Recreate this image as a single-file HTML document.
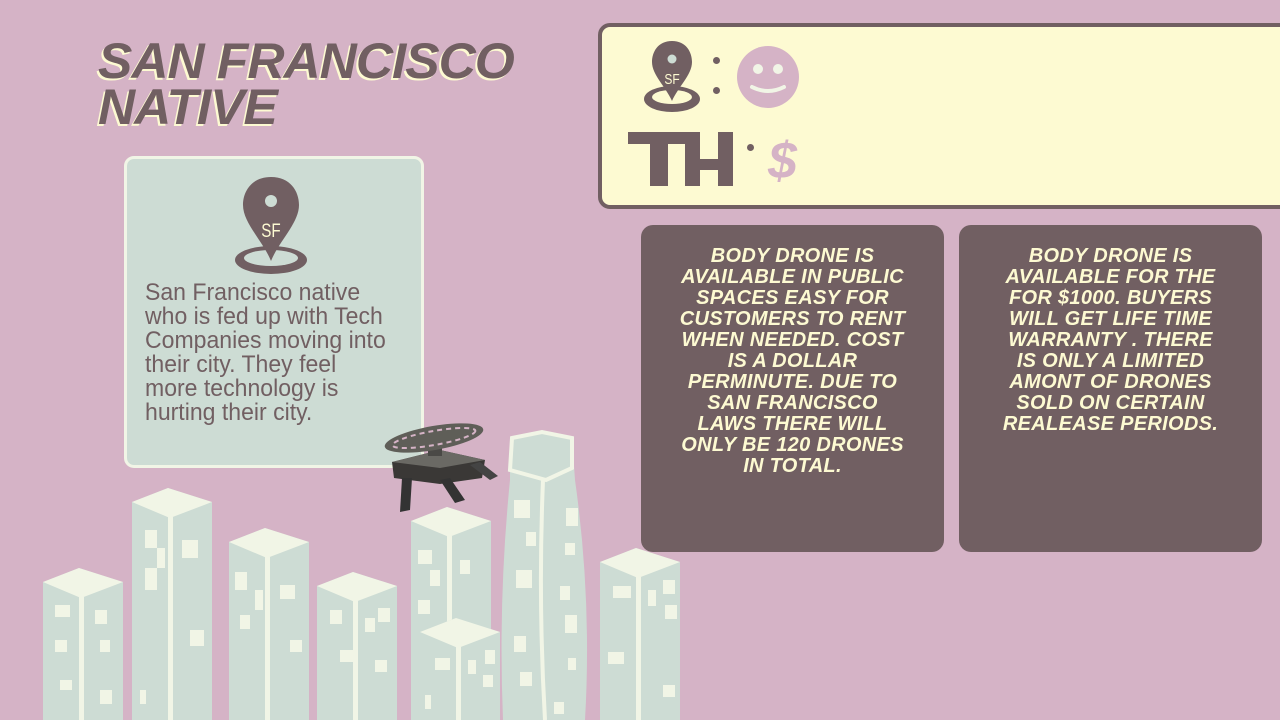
<!DOCTYPE html>
<html><head><meta charset="utf-8"><style>
body{margin:0;width:1280px;height:720px;background:#d5b3c6;position:relative;overflow:hidden;font-family:"Liberation Sans",sans-serif}
.title{position:absolute;left:98px;top:38px;font-weight:bold;font-style:italic;font-size:50px;line-height:46px;color:#715f62;text-shadow:-2px 2px 0 #fdfad2;letter-spacing:-1px;transform:scaleX(1.03);transform-origin:left}
.card{position:absolute;left:124px;top:156px;width:294px;height:306px;background:#cddcd4;border:3px solid #f1f5e6;border-radius:10px}
.card p{position:absolute;left:18px;top:122px;margin:0;white-space:nowrap;font-size:24px;line-height:24px;color:#715f62;transform:scaleX(0.96);transform-origin:left}
.top{position:absolute;left:598px;top:23px;width:690px;height:178px;background:#fdfad2;border:4px solid #715f62;border-radius:12px}
.box{position:absolute;top:225px;width:303px;height:327px;background:#715f62;border-radius:12px;color:#fdfad2;font-weight:bold;font-style:italic;font-size:20px;line-height:21px;text-align:center;box-sizing:border-box;padding-top:21px;letter-spacing:0.3px;overflow:hidden}
</style></head><body>
<div class="title">SAN FRANCISCO<br>NATIVE</div>
<div class="card">
<svg style="position:absolute;left:104px;top:16px" width="80" height="104" viewBox="0 0 80 104">
<ellipse cx="40" cy="85" rx="36" ry="14" fill="#715f62"/><ellipse cx="40" cy="83" rx="27" ry="8" fill="#cddcd4"/>
<path d="M40 2 C21 2 12 16 12 30 C12 48 32 66 40 86 C48 66 68 48 68 30 C68 16 59 2 40 2Z" fill="#715f62"/>
<circle cx="40" cy="26" r="6" fill="#cddcd4"/>
<text x="40" y="62" text-anchor="middle" font-family="Liberation Sans,sans-serif" font-size="19" fill="#fdfad2" transform="translate(40 0) scale(0.8 1) translate(-40 0)">SF</text></svg>
<p>San Francisco native<br>who is fed up with Tech<br>Companies moving into<br>their city. They feel<br>more technology is<br>hurting their city.</p>
</div>
<div class="top">
<svg style="position:absolute;left:40px;top:12px" width="60" height="76" viewBox="0 0 60 76">
<ellipse cx="30" cy="60" rx="28" ry="13" fill="#715f62"/><ellipse cx="30" cy="58" rx="20" ry="7" fill="#fdfad2"/>
<path d="M30 2 C16 2 10 13 10 23 C10 36 24 48 30 62 C36 48 50 36 50 23 C50 13 44 2 30 2Z" fill="#715f62"/>
<circle cx="30" cy="20" r="4.5" fill="#cddcd4"/>
<text x="30" y="45" text-anchor="middle" font-family="Liberation Sans,sans-serif" font-size="15" fill="#fdfad2" transform="translate(30 0) scale(0.8 1) translate(-30 0)">SF</text></svg>
<div style="position:absolute;left:111px;top:30px;width:7px;height:7px;border-radius:50%;background:#715f62"></div>
<div style="position:absolute;left:111px;top:60px;width:7px;height:7px;border-radius:50%;background:#715f62"></div>
<svg style="position:absolute;left:134px;top:18px" width="64" height="64" viewBox="0 0 64 64"><circle cx="32" cy="32" r="31" fill="#d5b3c6"/><circle cx="22" cy="24" r="5" fill="#f1f5e6"/><circle cx="42" cy="24" r="5" fill="#f1f5e6"/><path d="M16 42 Q32 50 48 42" stroke="#f1f5e6" stroke-width="4" fill="none" stroke-linecap="round"/></svg>
<svg style="position:absolute;left:26px;top:105px" width="110" height="56" viewBox="0 0 110 56" fill="#715f62">
<rect x="0" y="0" width="60" height="12"/><rect x="22" y="0" width="18" height="54"/>
<rect x="57" y="0" width="15" height="54"/><rect x="57" y="27" width="48" height="11"/><rect x="90" y="0" width="15" height="54"/>
</svg>
<div style="position:absolute;left:145px;top:117px;width:7px;height:7px;border-radius:50%;background:#715f62"></div>
<div style="position:absolute;left:166px;top:107px;font-weight:bold;font-style:italic;font-size:52px;line-height:54px;color:#d5b3c6">$</div>
</div>
<div class="box" style="left:641px">BODY DRONE IS<br>AVAILABLE IN PUBLIC<br>SPACES EASY FOR<br>CUSTOMERS TO RENT<br>WHEN NEEDED. COST<br>IS A DOLLAR<br>PERMINUTE. DUE TO<br>SAN FRANCISCO<br>LAWS THERE WILL<br>ONLY BE 120 DRONES<br>IN TOTAL.</div>
<div class="box" style="left:959px">BODY DRONE IS<br>AVAILABLE FOR THE<br>FOR $1000. BUYERS<br>WILL GET LIFE TIME<br>WARRANTY . THERE<br>IS ONLY A LIMITED<br>AMONT OF DRONES<br>SOLD ON CERTAIN<br>REALEASE PERIODS.</div>
<svg style="position:absolute;left:0;top:0" width="1280" height="720" viewBox="0 0 1280 720">
<defs>
<g id="b"><path d="M0 14 L36 0 L80 14 L80 300 L0 300Z" fill="#cddcd4"/><path d="M0 14 L36 0 L80 14 L38 30Z" fill="#f1f5e6"/><rect x="36" y="29" width="5" height="271" fill="#f1f5e6"/></g>
</defs>
<use href="#b" x="43" y="568"/>
<use href="#b" x="132" y="488"/>
<use href="#b" x="229" y="528"/>
<use href="#b" x="317" y="572"/>
<use href="#b" x="411" y="507"/>
<use href="#b" x="420" y="618"/>
<use href="#b" x="600" y="548"/>
<path d="M510 438 L542 432 L572 438 L575 480 Q592 600 585 720 L503 720 Q498 600 510 480Z" fill="#cddcd4"/>
<path d="M512 438 L542 432 L572 438 L572 468 L546 480 L510 470Z" fill="none" stroke="#f1f5e6" stroke-width="4"/>
<path d="M543 480 Q538 600 545 720" stroke="#f1f5e6" stroke-width="4" fill="none"/>
<g fill="#f1f5e6">
<rect x="55" y="605" width="15" height="12"/><rect x="95" y="610" width="12" height="14"/><rect x="55" y="640" width="12" height="12"/><rect x="100" y="640" width="10" height="12"/><rect x="60" y="680" width="12" height="10"/><rect x="100" y="690" width="12" height="14"/>
<rect x="145" y="530" width="12" height="18"/><rect x="157" y="548" width="8" height="20"/><rect x="182" y="540" width="16" height="18"/><rect x="145" y="568" width="12" height="22"/><rect x="190" y="630" width="14" height="16"/><rect x="140" y="690" width="6" height="14"/>
<rect x="235" y="572" width="12" height="18"/><rect x="255" y="590" width="8" height="20"/><rect x="280" y="585" width="15" height="14"/><rect x="240" y="615" width="10" height="14"/><rect x="290" y="640" width="12" height="12"/>
<rect x="330" y="610" width="12" height="14"/><rect x="365" y="618" width="10" height="14"/><rect x="378" y="608" width="12" height="14"/><rect x="340" y="650" width="14" height="12"/><rect x="375" y="660" width="12" height="12"/>
<rect x="418" y="550" width="14" height="14"/><rect x="430" y="570" width="10" height="16"/><rect x="418" y="600" width="12" height="14"/><rect x="460" y="560" width="10" height="14"/>
<rect x="435" y="658" width="15" height="12"/><rect x="468" y="660" width="8" height="14"/><rect x="485" y="650" width="10" height="14"/><rect x="483" y="675" width="10" height="12"/><rect x="425" y="695" width="6" height="14"/>
<rect x="514" y="500" width="16" height="18"/><rect x="526" y="532" width="10" height="14"/><rect x="516" y="570" width="16" height="18"/><rect x="566" y="508" width="12" height="18"/><rect x="565" y="543" width="10" height="12"/><rect x="560" y="586" width="10" height="14"/><rect x="565" y="615" width="12" height="18"/><rect x="514" y="636" width="12" height="16"/><rect x="520" y="672" width="12" height="14"/><rect x="568" y="658" width="8" height="12"/><rect x="554" y="702" width="10" height="12"/>
<rect x="613" y="586" width="18" height="12"/><rect x="648" y="590" width="8" height="16"/><rect x="663" y="580" width="12" height="14"/><rect x="665" y="605" width="12" height="14"/><rect x="608" y="652" width="16" height="12"/><rect x="663" y="685" width="12" height="12"/>
</g>
<g>
<path d="M392 462 L440 450 L485 460 L482 478 L440 484 L394 478Z" fill="#3a3836"/>
<path d="M392 462 L440 450 L485 460 L440 468Z" fill="#6a6964"/>
<path d="M402 478 L412 478 L410 510 L400 512Z" fill="#333"/>
<path d="M440 480 L450 478 L465 500 L455 503Z" fill="#333"/>
<path d="M470 465 L480 462 L498 476 L490 480Z" fill="#444"/>
<rect x="428" y="448" width="14" height="8" fill="#4a4946"/>
<ellipse cx="434" cy="438" rx="50" ry="12" transform="rotate(-10 434 438)" fill="#5f5e58"/>
<ellipse cx="434" cy="438" rx="42" ry="7" transform="rotate(-10 434 438)" fill="none" stroke="#d5b3c6" stroke-width="2" stroke-dasharray="5 4"/>
</g>
</svg>
</body></html>
